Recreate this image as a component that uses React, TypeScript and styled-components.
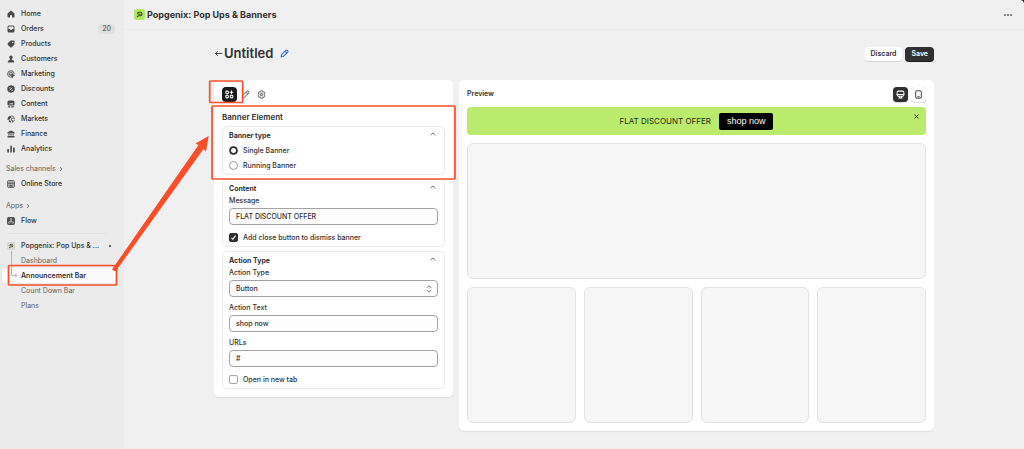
import React from "react";
import styled, { createGlobalStyle } from "styled-components";

const Global = createGlobalStyle`
  *, *::before, *::after { box-sizing: border-box; }
  body {
    margin: 0;
    background: #f0f0f0;
    color: #303030;
    font: 500 7px/10px Inter, "Liberation Sans", sans-serif;
  }
  button, input, select { font: inherit; color: inherit; margin: 0; }
  a { color: inherit; text-decoration: none; }
  h1, h2, h3, ul, fieldset { margin: 0; padding: 0; border: 0; font: inherit; }
  ul { list-style: none; }
  svg { display: block; flex: none; }
`;

const Shell = styled.div`
  position: relative;
  display: flex;
  min-height: 100vh;
`;

const Sidebar = styled.nav`
  display: flex;
  flex-direction: column;
  flex: 0 0 124px;
  background: #ebebeb;
  padding: 6px 7px 0;
`;

const NavLink = styled.a`
  display: flex;
  align-items: center;
  gap: 6px;
  height: 15px;
  white-space: nowrap;
  span:first-of-type { flex: 1; }
`;

const CountBadge = styled.span`
  padding: 0 4px;
  border-radius: 4px;
  background: #e0e0e0;
  color: #616161;
  margin-right: 2px;
`;

const NavSection = styled.div`
  margin: 5px 0 2px;
`;

const SectionLabel = styled.div`
  display: flex;
  align-items: center;
  gap: 3px;
  height: 15px;
  margin-left: -1px;
  color: #616161;
  font-weight: 400;
`;

const Divider = styled.hr`
  width: 100px;
  margin: 3px 0 4px;
  border: 0;
  border-top: 1px solid #e3e3e3;
`;

const SubLink = styled.a<{ $active?: boolean }>`
  display: flex;
  align-items: center;
  height: 15px;
  margin: 0 0 0 -5px;
  padding-left: 19px;
  border-radius: 4px;
  color: ${(p) => (p.$active ? "#303030" : "#616161")};
  font-weight: ${(p) => (p.$active ? 600 : 400)};
  background: ${(p) => (p.$active ? "#fafafa" : "transparent")};
`;

const SubNav = styled.ul`
  position: relative;
`;

const Branch = styled.svg`
  position: absolute;
  left: 3px;
  top: -2px;
`;

const PinDot = styled.i`
  width: 2px;
  height: 2px;
  border-radius: 1px;
  margin-right: 6px;
  background: #303030;
`;

const Main = styled.div`
  flex: 1;
  min-width: 0;
`;

const TopBar = styled.header`
  display: flex;
  align-items: center;
  gap: 2px;
  height: 30px;
  padding: 0 12px 0 10px;
  border-bottom: 1px solid #ebebeb;
  font-size: 9px;
  font-weight: 700;
`;

const MoreButton = styled.button`
  display: flex;
  gap: 1px;
  margin-left: auto;
  padding: 4px 0;
  border: 0;
  background: none;
  i { width: 2px; height: 2px; background: #8a8a8a; }
`;

const Page = styled.main`
  max-width: 736px;
  margin: 0 auto;
  padding: 16px 8px;
`;

const PageHeader = styled.div`
  display: flex;
  align-items: center;
  height: 15px;
  margin-bottom: 19px;
`;

const PageTitle = styled.h1`
  font-size: 13px;
  line-height: 15px;
  font-weight: 600;
  margin-right: 7px;
`;

const IconButton = styled.button<{ $color?: string }>`
  display: flex;
  padding: 0;
  border: 0;
  background: none;
  color: ${(p) => p.$color ?? "#4a4a4a"};
`;

const HeaderActions = styled.div`
  display: flex;
  gap: 3px;
  margin-left: auto;
`;

const ActionButton = styled.button<{ $primary?: boolean }>`
  height: 14px;
  padding: 0 6px;
  border: 0;
  border-radius: 4px;
  font-weight: 600;
  line-height: 14px;
  background: ${(p) => (p.$primary ? "#303030" : "#fff")};
  color: ${(p) => (p.$primary ? "#fff" : "#303030")};
  box-shadow: 0 1px 0 ${(p) => (p.$primary ? "#1a1a1a" : "#d4d4d4")};
`;

const Columns = styled.div`
  display: grid;
  grid-template-columns: 239px minmax(0, 1fr);
  gap: 6px;
  align-items: start;
`;

const Card = styled.section`
  padding: 7px 8px 8px;
  border-radius: 5px;
  background: #fff;
  box-shadow: 0 1px 1px #dedede;
`;

const Tabs = styled.div`
  display: flex;
  gap: 1px;
  height: 15px;
`;

const Tab = styled.button<{ $active?: boolean }>`
  display: flex;
  align-items: center;
  justify-content: center;
  width: 15px;
  height: 15px;
  padding: 0;
  border: 0;
  border-radius: 4px;
  background: ${(p) => (p.$active ? "#1a1a1a" : "transparent")};
  color: ${(p) => (p.$active ? "#fff" : "#7a7a7a")};
`;

const CardHeading = styled.h2`
  margin: 10px 0 4px;
  font-size: 8px;
  font-weight: 600;
`;

const Stack = styled.div`
  display: grid;
  gap: 4px;
`;

const Group = styled.fieldset`
  min-width: 0;
  padding: 4px 6px 1px;
  border: 1px solid #ebebeb;
  border-radius: 5px;
`;

const GroupHead = styled.div`
  display: flex;
  justify-content: space-between;
  height: 10px;
  margin-bottom: 2px;
  padding-right: 2px;
  font-weight: 700;
`;

const Choice = styled.label`
  display: flex;
  align-items: center;
  gap: 5px;
  height: 15px;
`;

const Radio = styled.input.attrs({ type: "radio" })`
  appearance: none;
  width: 9px;
  height: 9px;
  border: 1px solid #9a9a9a;
  border-radius: 50%;
  background: #fff;
  &:checked {
    border-color: #303030;
    background: radial-gradient(circle, #fff 2px, #303030 3px);
  }
`;

const Check = styled.input.attrs({ type: "checkbox" })`
  appearance: none;
  width: 9px;
  height: 9px;
  border: 1px solid #a6a6a6;
  border-radius: 2px;
  background: #fff;
`;

const CheckWrap = styled.span`
  position: relative;
  display: flex;
  svg { position: absolute; left: 0; top: 0; visibility: hidden; }
  input:checked { border-color: #303030; background: #303030; }
  input:checked + svg { visibility: visible; }
`;

const Field = styled.label`
  display: block;
  & + label { margin-top: 5px; }
  & + & { margin-top: 6px; }
`;

const Control = styled.span`
  position: relative;
  display: block;
  margin-top: 2px;
  svg { position: absolute; right: 6px; top: 5px; }
`;

const TextInput = styled.input`
  display: block;
  width: 100%;
  height: 17px;
  padding: 0 6px;
  border: 1px solid #a3a3a3;
  border-radius: 4px;
  background: #fdfdfd;
`;

const Select = styled(TextInput).attrs({ as: "select" })`
  appearance: none;
`;

const PreviewHead = styled.div`
  display: flex;
  justify-content: space-between;
  height: 15px;
  h2 { font-weight: 600; line-height: 13px; }
`;

const Devices = styled.div`
  display: flex;
  gap: 3px;
`;

const DeviceButton = styled.button<{ $active?: boolean }>`
  display: flex;
  align-items: center;
  justify-content: center;
  width: 15px;
  height: 15px;
  padding: 0;
  border: 0;
  border-radius: 4px;
  background: ${(p) => (p.$active ? "#303030" : "#fff")};
  color: ${(p) => (p.$active ? "#fff" : "#4a4a4a")};
  box-shadow: 0 0 1px #bbb, 0 1px 0 #e0e0e0;
`;

const Banner = styled.div`
  position: relative;
  display: flex;
  align-items: center;
  justify-content: center;
  gap: 8px;
  height: 28px;
  margin: 5px 0 8px;
  border-radius: 4px;
  background: #bbeb6c;
  color: #1f2a10;
  font-size: 8px;
  font-weight: 400;
`;

const BannerButton = styled.button`
  height: 17px;
  padding: 0 8px;
  border: 0;
  border-radius: 2px;
  background: #000;
  color: #fff;
  font: 400 9px/17px "Liberation Sans", Arial, sans-serif;
`;

const BannerClose = styled(IconButton)`
  position: absolute;
  right: 7px;
  top: 7px;
`;

const Placeholder = styled.div`
  height: 136px;
  border: 1px solid #e3e3e3;
  border-radius: 6px;
  background: #f6f6f6;
`;

const PlaceholderRow = styled.div`
  display: grid;
  grid-template-columns: repeat(4, 1fr);
  gap: 8px;
  margin-top: 8px;
`;

const Annotations = styled.svg`
  position: absolute;
  left: 0;
  top: 0;
  pointer-events: none;
`;

const Corner = styled.svg`
  position: absolute;
  right: 0;
  top: 0;
`;

type Glyph = { size?: number; children: React.ReactNode };
const Solid = ({ size = 8, children }: Glyph) => (
  <svg width={size} height={size} viewBox="0 0 16 16" fill="#4a4a4a">{children}</svg>
);
const Line = ({ size = 8, children }: Glyph) => (
  <svg width={size} height={size} viewBox="0 0 16 16" fill="none" stroke="currentColor" strokeWidth="1.8" strokeLinecap="round" strokeLinejoin="round">{children}</svg>
);

const icons: Record<string, React.ReactNode> = {
  Home: <path d="M8 1 2 6Q1 7 1 8v5q0 2 2 2h3v-4q0-1 2-1t2 1v4h3q2 0 2-2V8q0-1-1-2Z" />,
  Orders: <path fillRule="evenodd" d="M4 1h8q3 0 3 3v8q0 3-3 3H4q-3 0-3-3V4q0-3 3-3Zm0 2q-1 0-1 1v4h2q1 0 1.500 1T8 10t1.500-1 1.500-1h2V4q0-1-1-1Z" />,
  Products: <path fillRule="evenodd" d="M8 1h5q2 0 2 2v5q0 1-1 2l-4 4q-2 2-4 0l-4-4q-2-2 0-4l4-4q1-1 2-1Zm3.500 2.500a1.300 1.300 0 1 0 .1 0Z" />,
  Customers: <path d="M8 1a3.500 3.500 0 1 1-.1 0ZM6.500 7h3v2q5 1 5 5 0 1-1 1h-11q-1 0-1-1 0-4 5-5Z" />,
  Marketing: (
    <g fill="none" stroke="#4a4a4a" strokeWidth="1.700" strokeLinecap="round">
      <path d="M14.500 7A6.700 6.700 0 1 0 7 14.700M11.500 7A3.700 3.700 0 1 0 7 11.500" />
      <path d="m8 8 7 2.500-3 1.500-1.500 3Z" fill="#4a4a4a" />
    </g>
  ),
  Discounts: (
    <>
      <path d="m8 0 2.200 1.600 2.700-.2.800 2.600 2.100 1.700L15 8l.8 2.600-2.100 1.500-.8 2.600-2.700-.2L8 16l-2.200-1.500-2.700.2-.8-2.600L.2 10.600 1 8 .2 5.700 2.300 4l.8-2.600 2.700.2Z" />
      <path d="m5.500 10.500 5-5" stroke="#ebebeb" strokeWidth="1.500" />
      <circle cx="5.800" cy="5.800" r="1.200" fill="#ebebeb" /><circle cx="10.300" cy="10.300" r="1.200" fill="#ebebeb" />
    </>
  ),
  Content: <path fillRule="evenodd" d="M4 1h8q3 0 3 3v5q0 2-2 2H3q-2 0-2-2V4q0-3 3-3Zm-.5 7.500h9L10 5.500l-2 2-1.500-1ZM1.500 12.500h5V15H4q-2 0-2.500-2.500Zm7 0h6Q14 15 12 15H8.500Z" />,
  Markets: (
    <>
      <path d="M6 1.300Q1 3 1 8q0 1 .3 2L5 9l2-3 2-1-1-3ZM3 13q2 2 5 2l-1-4-2-1Z" />
      <path d="M9 1.500q5 .5 5.800 5.500L12 6l-3 1-1 3 3 1-.5 3.500q4-1.500 4.300-5" fill="none" stroke="#4a4a4a" strokeWidth="1.600" />
    </>
  ),
  Finance: <path d="M8 1 15 4.500V7H1V4.500ZM2.500 8H5v3H2.500Zm4.200 0h2.600v3H6.700ZM11 8h2.500v3H11ZM1 12h14v3H1Z" />,
  Analytics: <path d="M1.500 8h1.500q1 0 1 1v5q0 1-1 1H1.500q-1 0-1-1V9q0-1 1-1Zm6-7h1Q9.800 1 9.800 2v12q0 1-1 1H7.500q-1 0-1-1V2q0-1 1-1ZM13 5h1.500q1 0 1 1v8q0 1-1 1H13q-1 0-1-1V6q0-1 1-1Z" />,
};

const Pencil = ({ size = 9 }: { size?: number }) => (
  <Line size={size}><path d="m2 14 .7-4L10.500 2.200q1.300-1 2.500.2l.6.600q1.200 1.200.2 2.500L6 13.300ZM9 4l3 3" /></Line>
);
const Chevron = () => (
  <svg width="6" height="6" viewBox="0 0 6 6" fill="none" stroke="#707070"><path d="m.5 4.200 2.500-2.400 2.500 2.400" /></svg>
);
const SmallChevron = () => (
  <svg width="4" height="6" viewBox="0 0 4 6" fill="none" stroke="#616161" strokeWidth=".9"><path d="m1 1.200 2 1.900-2 1.900" /></svg>
);
const AppMark = ({ size, bg }: { size: number; bg: string }) => (
  <svg width={size} height={size} viewBox="0 0 22 22">
    <rect width="22" height="22" rx="5" fill={bg} />
    <path d="M7 8.500Q8 6.500 11 6.500h1.500a3.500 3.500 0 0 1 0 7H10q-2 0-3.500 2M8.500 10.500h4" fill="none" stroke="#37471f" strokeWidth="2.200" strokeLinecap="round" />
  </svg>
);

const GroupTitle = ({ children }: { children: string }) => (
  <GroupHead>
    <h3>{children}</h3>
    <IconButton type="button" aria-label={`Collapse ${children}`}><Chevron /></IconButton>
  </GroupHead>
);

const CheckBox = ({ checked = false }: { checked?: boolean }) => (
  <CheckWrap>
    <Check defaultChecked={checked} />
    <svg width="9" height="9" viewBox="0 0 9 9" fill="none" stroke="#fff" strokeWidth="1.100"><path d="m2.400 4.800 1.500 1.400 2.700-3.500" /></svg>
  </CheckWrap>
);

const navItems = ["Home", "Orders", "Products", "Customers", "Marketing", "Discounts", "Content", "Markets", "Finance", "Analytics"];
const subItems = ["Dashboard", "Announcement Bar", "Count Down Bar", "Plans"];

export default function App() {
  return (
    <>
      <Global />
      <Shell>
        <Sidebar>
          <ul>
            {navItems.map((name) => (
              <li key={name}>
                <NavLink href="#">
                  <Solid>{icons[name]}</Solid>
                  <span>{name}</span>
                  {name === "Orders" && <CountBadge>20</CountBadge>}
                </NavLink>
              </li>
            ))}
          </ul>
          <NavSection>
            <SectionLabel>Sales channels <SmallChevron /></SectionLabel>
            <NavLink href="#">
              <svg width="8" height="8" viewBox="0 0 16 16" fill="none" stroke="#4a4a4a" strokeWidth="1.600">
                <rect x="1" y="1" width="14" height="14" rx="3" />
                <path d="M4 4h8l1 3H3ZM4 7v5.500h8V7M7 12.500V9.500h2v3" />
              </svg>
              <span>Online Store</span>
            </NavLink>
          </NavSection>
          <NavSection>
            <SectionLabel>Apps <SmallChevron /></SectionLabel>
            <NavLink href="#">
              <svg width="8" height="8" viewBox="0 0 16 16" fill="none" stroke="#e0e0e0" strokeWidth="1.300">
                <rect width="16" height="16" rx="4" fill="#4a4a4a" stroke="none" />
                <circle cx="8" cy="4.500" r="1.700" /><circle cx="4.500" cy="11" r="1.700" /><circle cx="11.500" cy="11" r="1.700" />
                <path d="M8 6v3M6 9.500 8 8l2 1.500" />
              </svg>
              <span>Flow</span>
            </NavLink>
          </NavSection>
          <Divider />
          <NavLink href="#">
            <AppMark size={8} bg="#d6d6d6" />
            <span>Popgenix: Pop Ups &amp; ...</span>
            <PinDot />
          </NavLink>
          <SubNav>
            {subItems.map((name) => (
              <li key={name}><SubLink href="#" $active={name === "Announcement Bar"}>{name}</SubLink></li>
            ))}
            <Branch width="8" height="30" viewBox="0 0 8 30" fill="none" stroke="#b5b5b5" aria-hidden="true">
              <path d="M1.500 0v23q0 1.500 1.500 1.500h3.500M5 22.500l2 2-2 2" />
            </Branch>
          </SubNav>
        </Sidebar>

        <Main>
          <TopBar>
            <AppMark size={11} bg="#b2e665" />
            <span>Popgenix: Pop Ups &amp; Banners</span>
            <MoreButton type="button" aria-label="More actions"><i /><i /><i /></MoreButton>
          </TopBar>

          <Page>
            <PageHeader>
              <IconButton type="button" aria-label="Back">
                <svg width="10" height="9" viewBox="0 0 10 9" fill="none" stroke="currentColor" strokeLinecap="round" strokeLinejoin="round"><path d="M8 4.500H1.500M3.500 2.500l-2 2 2 2" /></svg>
              </IconButton>
              <PageTitle>Untitled</PageTitle>
              <IconButton type="button" aria-label="Rename" $color="#2463d8"><Pencil /></IconButton>
              <HeaderActions>
                <ActionButton type="button">Discard</ActionButton>
                <ActionButton type="button" $primary>Save</ActionButton>
              </HeaderActions>
            </PageHeader>

            <Columns>
              <Card>
                <Tabs>
                  <Tab type="button" $active aria-label="Elements">
                    <Line size={9}><rect x="1.500" y="2" width="4.500" height="4.500" rx="1.500" /><path d="M11.500 1.500v5M9 4h5" /><rect x="1.500" y="9.500" width="4.500" height="4.500" rx="1.500" /><rect x="9.500" y="9.500" width="4.500" height="4.500" rx="1.500" /></Line>
                  </Tab>
                  <Tab type="button" aria-label="Style"><Pencil /></Tab>
                  <Tab type="button" aria-label="Settings">
                    <Line size={9}><path d="m6.500 1.500h3l.7 2 2.200-.3 1.500 2.500-1.300 2.300 1.300 2.300-1.500 2.500-2.200-.3-.7 2h-3l-.7-2-2.200.3-1.500-2.500L3.400 8 2.100 5.700l1.500-2.500 2.200.3Z" /><circle cx="8" cy="8" r="2" /></Line>
                  </Tab>
                </Tabs>
                <CardHeading>Banner Element</CardHeading>
                <Stack>
                  <Group>
                    <GroupTitle>Banner type</GroupTitle>
                    <Choice><Radio name="bannerType" defaultChecked />Single Banner</Choice>
                    <Choice><Radio name="bannerType" />Running Banner</Choice>
                  </Group>
                  <Group>
                    <GroupTitle>Content</GroupTitle>
                    <Field>Message<Control><TextInput defaultValue="FLAT DISCOUNT OFFER" /></Control></Field>
                    <Choice><CheckBox checked />Add close button to dismiss banner</Choice>
                  </Group>
                  <Group>
                    <GroupTitle>Action Type</GroupTitle>
                    <Field>
                      Action Type
                      <Control>
                        <Select><option>Button</option></Select>
                        <svg width="6" height="8" viewBox="0 0 6 8" fill="none" stroke="#707070"><path d="m1 2.800 2-2 2 2M1 5.200l2 2 2-2" /></svg>
                      </Control>
                    </Field>
                    <Field>Action Text<Control><TextInput defaultValue="shop now" /></Control></Field>
                    <Field>URLs<Control><TextInput defaultValue="#" /></Control></Field>
                    <Choice><CheckBox />Open in new tab</Choice>
                  </Group>
                </Stack>
              </Card>

              <Card>
                <PreviewHead>
                  <h2>Preview</h2>
                  <Devices>
                    <DeviceButton type="button" $active aria-label="Desktop">
                      <Line size={9}><rect x="2" y="2" width="12" height="9" rx="2.500" /><path d="M2 8h12M6 11v3h4v-3M5 14.200h6" /></Line>
                    </DeviceButton>
                    <DeviceButton type="button" aria-label="Mobile">
                      <Line size={9}><rect x="3" y="1.500" width="10" height="13" rx="2.500" /><path d="M6.500 12h3" /></Line>
                    </DeviceButton>
                  </Devices>
                </PreviewHead>
                <Banner>
                  <span>FLAT DISCOUNT OFFER</span>
                  <BannerButton type="button">shop now</BannerButton>
                  <BannerClose type="button" aria-label="Close banner">
                    <svg width="5" height="5" viewBox="0 0 5 5" stroke="#2c3a18"><path d="m.5.5 4 4M4.500.5l-4 4" /></svg>
                  </BannerClose>
                </Banner>
                <Placeholder />
                <PlaceholderRow>
                  <Placeholder /><Placeholder /><Placeholder /><Placeholder />
                </PlaceholderRow>
              </Card>
            </Columns>
          </Page>
        </Main>

        <Annotations width="460" height="300" viewBox="0 0 460 300" fill="none" stroke="#fa4d28" strokeWidth="1.700" aria-hidden="true">
          <rect x="8.500" y="265.500" width="108" height="19.500" rx="1" />
          <rect x="209.700" y="81" width="33" height="21.500" rx="1" />
          <rect x="212" y="106" width="243" height="73" rx="1" />
          <path d="M112 269.500 198.500 145 195.500 143.500 208.700 136 206 151.500 203.500 149 115.500 271.500Z" fill="#fa4d28" stroke="none" />
        </Annotations>
        <Corner width="3" height="3" viewBox="0 0 3 3" aria-hidden="true"><path d="M0 0h3v3Q2.500.5 0 0Z" fill="#222" /></Corner>
      </Shell>
    </>
  );
}
